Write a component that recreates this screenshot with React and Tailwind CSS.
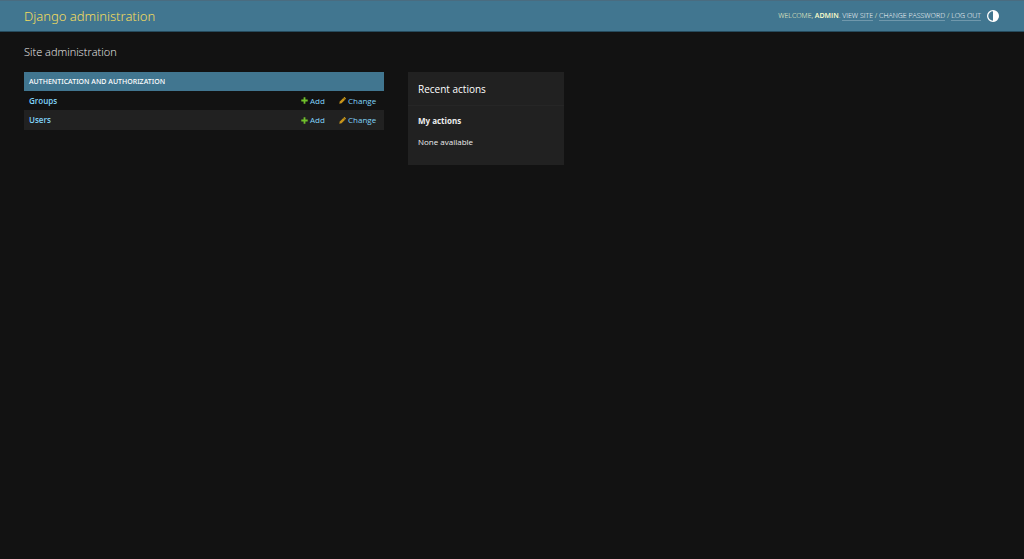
const models = [{ name: "Groups" }, { name: "Users" }];

function AddIcon() {
  return (
    <svg viewBox="0 0 7 7" className="h-[7px] w-[7px] shrink-0" aria-hidden="true">
      <path d="M2.6 0.3h1.8v2.3h2.3v1.8H4.4v2.3H2.6V4.4H0.3V2.6h2.3z" fill="#70bf2b" />
    </svg>
  );
}

function ChangeIcon() {
  return (
    <svg viewBox="0 0 8 8" className="h-[7px] w-[7px] shrink-0" aria-hidden="true">
      <path d="M0.3 7.7l0.6-2.6L4.9 1.1l2 2L2.9 7.1z" fill="#c8941a" />
      <path d="M5.2 0.8l0.7-0.6q0.4-0.2 0.8 0.1l1 1q0.3 0.4 0 0.8l-0.5 0.7z" fill="#dba617" />
    </svg>
  );
}

function ThemeIcon() {
  return (
    <svg viewBox="0 0 24 24" className="h-3 w-3" aria-hidden="true">
      <circle cx="12" cy="12" r="10.7" fill="none" stroke="#fff" strokeWidth="2.6" />
      <path d="M12 1a11 11 0 0 1 0 22z" fill="#fff" />
    </svg>
  );
}

function Header() {
  return (
    <header className="flex h-8 items-center justify-between border-y border-[#4a6c80] border-b-[#264b5d] bg-[#417690] px-6">
      <a href="#" className="pt-px font-['Noto_Sans','Open_Sans',sans-serif] text-[13px] font-light text-[#f5dd5d]">
        Django administration
      </a>
      <div className="flex items-center gap-1.5 pr-px text-[7px] leading-[9px] font-light uppercase text-[#ffffcc]">
        <div>
          Welcome, <strong className="font-semibold">admin</strong>.{" "}
          <a href="#" className="inline-block border-b border-white/25 text-white">View site</a> /{" "}
          <a href="#" className="inline-block border-b border-white/25 text-white">Change password</a> /{" "}
          <button type="button" className="border-b border-white/25 uppercase text-white">
            Log out
          </button>
        </div>
        <button type="button" aria-label="Toggle theme">
          <ThemeIcon />
        </button>
      </div>
    </header>
  );
}

function AppModule() {
  return (
    <table className="w-full border-collapse text-[8px] leading-3 text-[#81d4fa]">
      <caption className="bg-[#417690] px-[5px] text-left font-['Noto_Sans','Open_Sans',sans-serif] text-[7px] leading-[19px] font-medium text-white uppercase">
        <a href="#">Authentication and Authorization</a>
      </caption>
      <tbody>
        {models.map((model) => (
          <tr key={model.name} className="h-[19px] even:h-5 even:bg-[#212121]">
            <th scope="row" className="px-[5px] text-left font-semibold">
              <a href="#">{model.name}</a>
            </th>
            <td className="w-[38px]">
              <a href="#" className="flex items-center gap-0.5">
                <AddIcon />
                Add
              </a>
            </td>
            <td className="w-[45px]">
              <a href="#" className="flex items-center gap-0.5">
                <ChangeIcon />
                Change
              </a>
            </td>
          </tr>
        ))}
      </tbody>
    </table>
  );
}

function RecentActions() {
  return (
    <aside className="w-[156px] shrink-0 bg-[#212121] pb-[17px]">
      <h2 className="border-b border-[#262626] px-2.5 pt-[9px] pb-2 text-[10px] leading-4 text-white">
        Recent actions
      </h2>
      <h3 className="px-2.5 pt-[9px] text-[8px] leading-3 font-bold text-[#eeeeee]">My actions</h3>
      <p className="px-2.5 pt-[9px] text-[8px] leading-3 text-[#eeeeee]">None available</p>
    </aside>
  );
}

export default function App() {
  return (
    <div className="min-h-screen bg-[#121212] font-['Open_Sans','Noto_Sans',sans-serif]">
      <Header />
      <main className="px-6 pt-3">
        <h1 className="mb-3 text-[11px] leading-4 font-light text-[#eeeeee]">
          Site administration
        </h1>
        <div className="flex max-w-[540px] items-start gap-6">
          <div className="min-w-0 flex-1">
            <AppModule />
          </div>
          <RecentActions />
        </div>
      </main>
    </div>
  );
}
